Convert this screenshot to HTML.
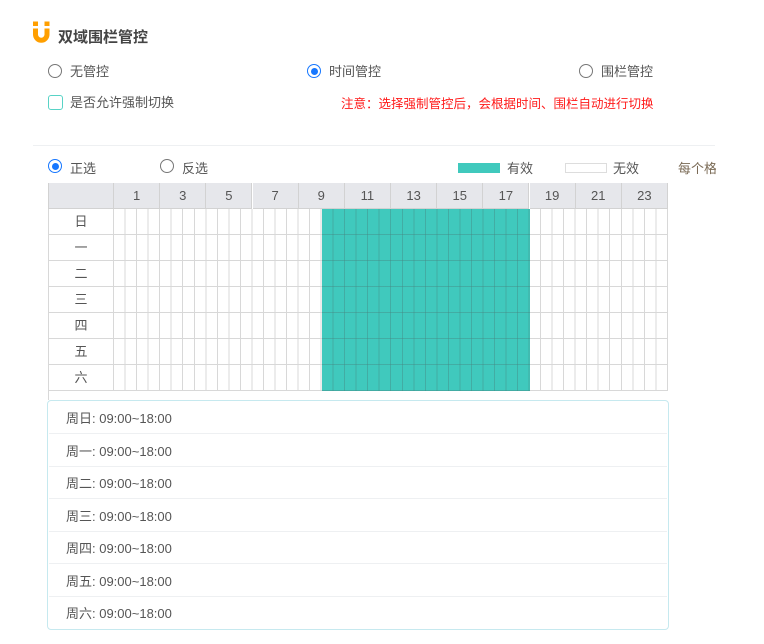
<!DOCTYPE html>
<html><head><meta charset="utf-8">
<style>
*{margin:0;padding:0;box-sizing:border-box}
body{width:764px;height:644px;background:#fff;font-family:"Liberation Sans","Noto Sans CJK SC",sans-serif;color:#555;font-size:13px;position:relative;overflow:hidden}
.a{position:absolute;white-space:nowrap}
.r{position:absolute;width:14px;height:14px;border:1px solid #777;border-radius:50%}
.r.on{border:1px solid #1677ff;background:#fff}
.r.on:after{content:"";position:absolute;left:2.5px;top:2.5px;width:7px;height:7px;border-radius:50%;background:#1677ff}
.hd{position:absolute;top:183px;height:26px;background:#e6e7eb;border-right:1px solid #d2d2d2;border-bottom:1px solid #d2d2d2;text-align:center;line-height:26px;font-size:13px;color:#555}
.row{position:absolute;left:48px;width:66px;height:26px;text-align:center;line-height:26px;border-bottom:1px solid #d8d8d8;color:#555}
.li{position:absolute;left:66px;font-size:13px;color:#555}
.sep{position:absolute;left:49px;width:618px;height:1px;background:#eef0f2}
</style></head><body>
<svg class="a" style="left:32px;top:21px" width="19" height="22" viewBox="0 0 19 22">
<rect x="1" y="0.5" width="5" height="4.5" fill="#ff9f00"/><rect x="12.5" y="0.5" width="5" height="4.5" fill="#ff9f00"/>
<path d="M3.5 7.5 V13.5 A5.75 5.75 0 0 0 15 13.5 V7.5" fill="none" stroke="#ff9f00" stroke-width="5"/>
</svg>
<div class="a" style="left:58px;top:26px;font-size:15px;font-weight:bold;color:#444">双域围栏管控</div>

<div class="r" style="left:48px;top:64px"></div><div class="a" style="left:70px;top:61px">无管控</div>
<div class="r on" style="left:307px;top:64px"></div><div class="a" style="left:329px;top:61px">时间管控</div>
<div class="r" style="left:579px;top:64px"></div><div class="a" style="left:601px;top:61px">围栏管控</div>
<div class="a" style="left:48px;top:95px;width:15px;height:15px;border:1.5px solid #58d3c6;border-radius:3px"></div>
<div class="a" style="left:70px;top:92px">是否允许强制切换</div>
<div class="a" style="left:341px;top:93px;color:#ff1a1a;font-size:12.5px">注意：选择强制管控后，会根据时间、围栏自动进行切换</div>

<div class="a" style="left:33px;top:145px;width:682px;height:1px;background:#eef0f2"></div>
<div class="r on" style="left:48px;top:159px"></div><div class="a" style="left:70px;top:158px">正选</div>
<div class="r" style="left:160px;top:159px"></div><div class="a" style="left:182px;top:158px">反选</div>
<div class="a" style="left:458px;top:163px;width:42px;height:10px;background:#40c9bd"></div><div class="a" style="left:507px;top:158px">有效</div>
<div class="a" style="left:565px;top:163px;width:42px;height:10px;border:1px solid #ddd"></div><div class="a" style="left:613px;top:158px">无效</div>
<div class="a" style="left:678px;top:158px;width:38px;overflow:hidden;color:#7a6a55">每个格子</div>

<div class="a" style="left:48px;top:183px;width:66px;height:26px;background:#e6e7eb;border-left:1px solid #d2d2d2;border-right:1px solid #d2d2d2;border-bottom:1px solid #d2d2d2"></div>
<div class="a" style="left:48px;top:209px;width:1px;height:191px;background:#d8d8d8"></div>
<div class="a" style="left:113px;top:209px;width:1px;height:182px;background:#d8d8d8"></div>
<div class="hd" style="left:114px;width:46.2px">1</div>
<div class="hd" style="left:160.2px;width:46.2px">3</div>
<div class="hd" style="left:206.3px;width:46.2px">5</div>
<div class="hd" style="left:252.5px;width:46.2px">7</div>
<div class="hd" style="left:298.7px;width:46.2px">9</div>
<div class="hd" style="left:344.8px;width:46.2px">11</div>
<div class="hd" style="left:391px;width:46.2px">13</div>
<div class="hd" style="left:437.2px;width:46.2px">15</div>
<div class="hd" style="left:483.3px;width:46.2px">17</div>
<div class="hd" style="left:529.5px;width:46.2px">19</div>
<div class="hd" style="left:575.7px;width:46.2px">21</div>
<div class="hd" style="left:621.8px;width:46.2px">23</div>
<div class="a" style="left:114px;top:209px;width:554px;height:182px;
background:
repeating-linear-gradient(to right,transparent 0,transparent 10.54px,#d8d8d8 10.54px,#d8d8d8 11.54px),
repeating-linear-gradient(to bottom,transparent 0,transparent 25px,#d8d8d8 25px,#d8d8d8 26px);"></div>
<div class="a" style="left:322px;top:209px;width:208px;height:182px;
background:
repeating-linear-gradient(to right,transparent 0,transparent 10.54px,rgba(70,130,125,.4) 10.54px,rgba(70,130,125,.4) 11.54px),
repeating-linear-gradient(to bottom,transparent 0,transparent 25px,rgba(70,130,125,.4) 25px,rgba(70,130,125,.4) 26px),#40c9bd;"></div>
<div class="row" style="top:209px">日</div>
<div class="row" style="top:235px">一</div>
<div class="row" style="top:261px">二</div>
<div class="row" style="top:287px">三</div>
<div class="row" style="top:313px">四</div>
<div class="row" style="top:339px">五</div>
<div class="row" style="top:365px">六</div>

<div class="a" style="left:47px;top:400px;width:622px;height:230px;border:1px solid #c6e9ef;border-radius:4px"></div>
<div class="sep" style="top:433px"></div>
<div class="sep" style="top:466px"></div>
<div class="sep" style="top:498px"></div>
<div class="sep" style="top:531px"></div>
<div class="sep" style="top:563px"></div>
<div class="sep" style="top:596px"></div>
<div class="li" style="top:408px">周日: 09:00~18:00</div>
<div class="li" style="top:441px">周一: 09:00~18:00</div>
<div class="li" style="top:473px">周二: 09:00~18:00</div>
<div class="li" style="top:506px">周三: 09:00~18:00</div>
<div class="li" style="top:538px">周四: 09:00~18:00</div>
<div class="li" style="top:571px">周五: 09:00~18:00</div>
<div class="li" style="top:603px">周六: 09:00~18:00</div>
</body></html>
